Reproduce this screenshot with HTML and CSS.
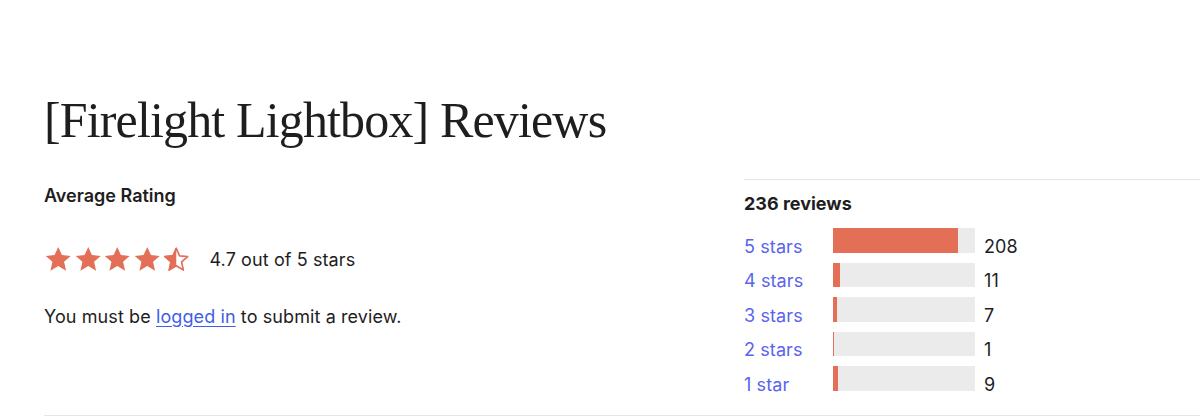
FILE: index.html
```html
<!DOCTYPE html>
<html lang="en">
<head>
<meta charset="utf-8">
<title>Reviews</title>
<link rel="stylesheet" href="styles.css">
</head>
<body>
<main class="page">
  <h1 class="title">[Firelight Lightbox] Reviews</h1>
  <div class="reviews">
    <section class="summary">
      <h3 class="avg-title">Average Rating</h3>
      <div class="rating">
        <div class="stars">
          <svg viewBox="0 0 24 24" class="star"><path d="M12 1.6l3.1 6.9 7.4.7-5.6 5 1.7 7.4L12 17.7l-6.6 3.9 1.7-7.4-5.6-5 7.4-.7z" fill="#e26f56"/></svg>
          <svg viewBox="0 0 24 24" class="star"><path d="M12 1.6l3.1 6.9 7.4.7-5.6 5 1.7 7.4L12 17.7l-6.6 3.9 1.7-7.4-5.6-5 7.4-.7z" fill="#e26f56"/></svg>
          <svg viewBox="0 0 24 24" class="star"><path d="M12 1.6l3.1 6.9 7.4.7-5.6 5 1.7 7.4L12 17.7l-6.6 3.9 1.7-7.4-5.6-5 7.4-.7z" fill="#e26f56"/></svg>
          <svg viewBox="0 0 24 24" class="star"><path d="M12 1.6l3.1 6.9 7.4.7-5.6 5 1.7 7.4L12 17.7l-6.6 3.9 1.7-7.4-5.6-5 7.4-.7z" fill="#e26f56"/></svg>
          <svg viewBox="0 0 24 24" class="star"><path d="M12 2.8l2.8 6.3 6.8.6-5.1 4.6 1.5 6.8L12 17.5l-6 3.6 1.5-6.8-5.1-4.6 6.8-.6z" fill="none" stroke="#e26f56" stroke-width="1.4" stroke-linejoin="round"/><path d="M12 1.6v16.1l-6.6 3.9 1.7-7.4-5.6-5 7.4-.7z" fill="#e26f56"/></svg>
        </div>
        <span class="rating-text">4.7 out of 5 stars</span>
      </div>
      <p class="login-note">You must be <a href="#">logged in</a> to submit a review.</p>
    </section>
    <section class="breakdown">
      <h3 class="count-title">236 reviews</h3>
      <ul class="bars">
        <li class="bar-row"><a href="#" class="bar-label">5 stars</a><span class="bar"><span class="fill" style="width:88.1%"></span></span><span class="bar-count">208</span></li>
        <li class="bar-row"><a href="#" class="bar-label">4 stars</a><span class="bar"><span class="fill" style="width:4.66%"></span></span><span class="bar-count">11</span></li>
        <li class="bar-row"><a href="#" class="bar-label">3 stars</a><span class="bar"><span class="fill" style="width:2.97%"></span></span><span class="bar-count">7</span></li>
        <li class="bar-row"><a href="#" class="bar-label">2 stars</a><span class="bar"><span class="fill" style="width:0.6%"></span></span><span class="bar-count">1</span></li>
        <li class="bar-row"><a href="#" class="bar-label">1 star</a><span class="bar"><span class="fill" style="width:3.81%"></span></span><span class="bar-count">9</span></li>
      </ul>
    </section>
  </div>
</main>
</body>
</html>
```
FILE: styles.css
```css
* { box-sizing: border-box; }
html, body { margin: 0; padding: 0; background: #fff; }
body {
  font-family: Inter, "Liberation Sans", sans-serif;
  color: #1e1e1e;
  font-size: 18px;
  letter-spacing: 0.1px;
  overflow: hidden;
}
.page {
  padding: 88px 0 0 44px;
}
.title {
  margin: 0;
  font-family: "Liberation Serif", serif;
  font-weight: 400;
  font-size: 50px;
  line-height: 64px;
  letter-spacing: -0.85px;
  color: #1e1e1e;
}
.reviews {
  display: grid;
  grid-template-columns: 700px 1fr;
  margin-top: 27px;
  padding-bottom: 24px;
  border-bottom: 1.5px solid #e6e6e6;
}
.summary { padding-top: 5px; }
.avg-title {
  margin: 0;
  font-size: 18px;
  font-weight: 600;
  line-height: 24px;
  letter-spacing: 0;
}
.rating {
  display: flex;
  align-items: center;
  margin-top: 37px;
}
.stars { display: flex; gap: 1px; }
.star { width: 28.5px; height: 28.5px; display: block; }
.rating-text { margin-left: 19px; }
.login-note { margin: 31px 0 0; line-height: 24px; }
.login-note a { color: #3f5ee8; text-decoration: underline; text-underline-offset: 3px; }
.breakdown {
  border-top: 1.5px solid #e6e6e6;
  padding-top: 12px;
}
.count-title {
  margin: 0;
  font-size: 18px;
  font-weight: 700;
  line-height: 24px;
  letter-spacing: 0;
}
.bars { list-style: none; margin: 12px 0 0; padding: 0; display: flex; flex-direction: column; gap: 10px; }
.bar-row { display: flex; align-items: flex-end; height: 24.5px; }
.bar-label {
  width: 89px;
  color: #5a64ee;
  text-decoration: none;
  line-height: 20px;
  margin-bottom: -4px;
}
.bar {
  width: 142px;
  height: 24.5px;
  background: #ebebeb;
  display: flex;
}
.fill { background: #e26f56; height: 100%; display: block; }
.bar-count { margin-left: 9px; line-height: 20px; margin-bottom: -4px; }
```
